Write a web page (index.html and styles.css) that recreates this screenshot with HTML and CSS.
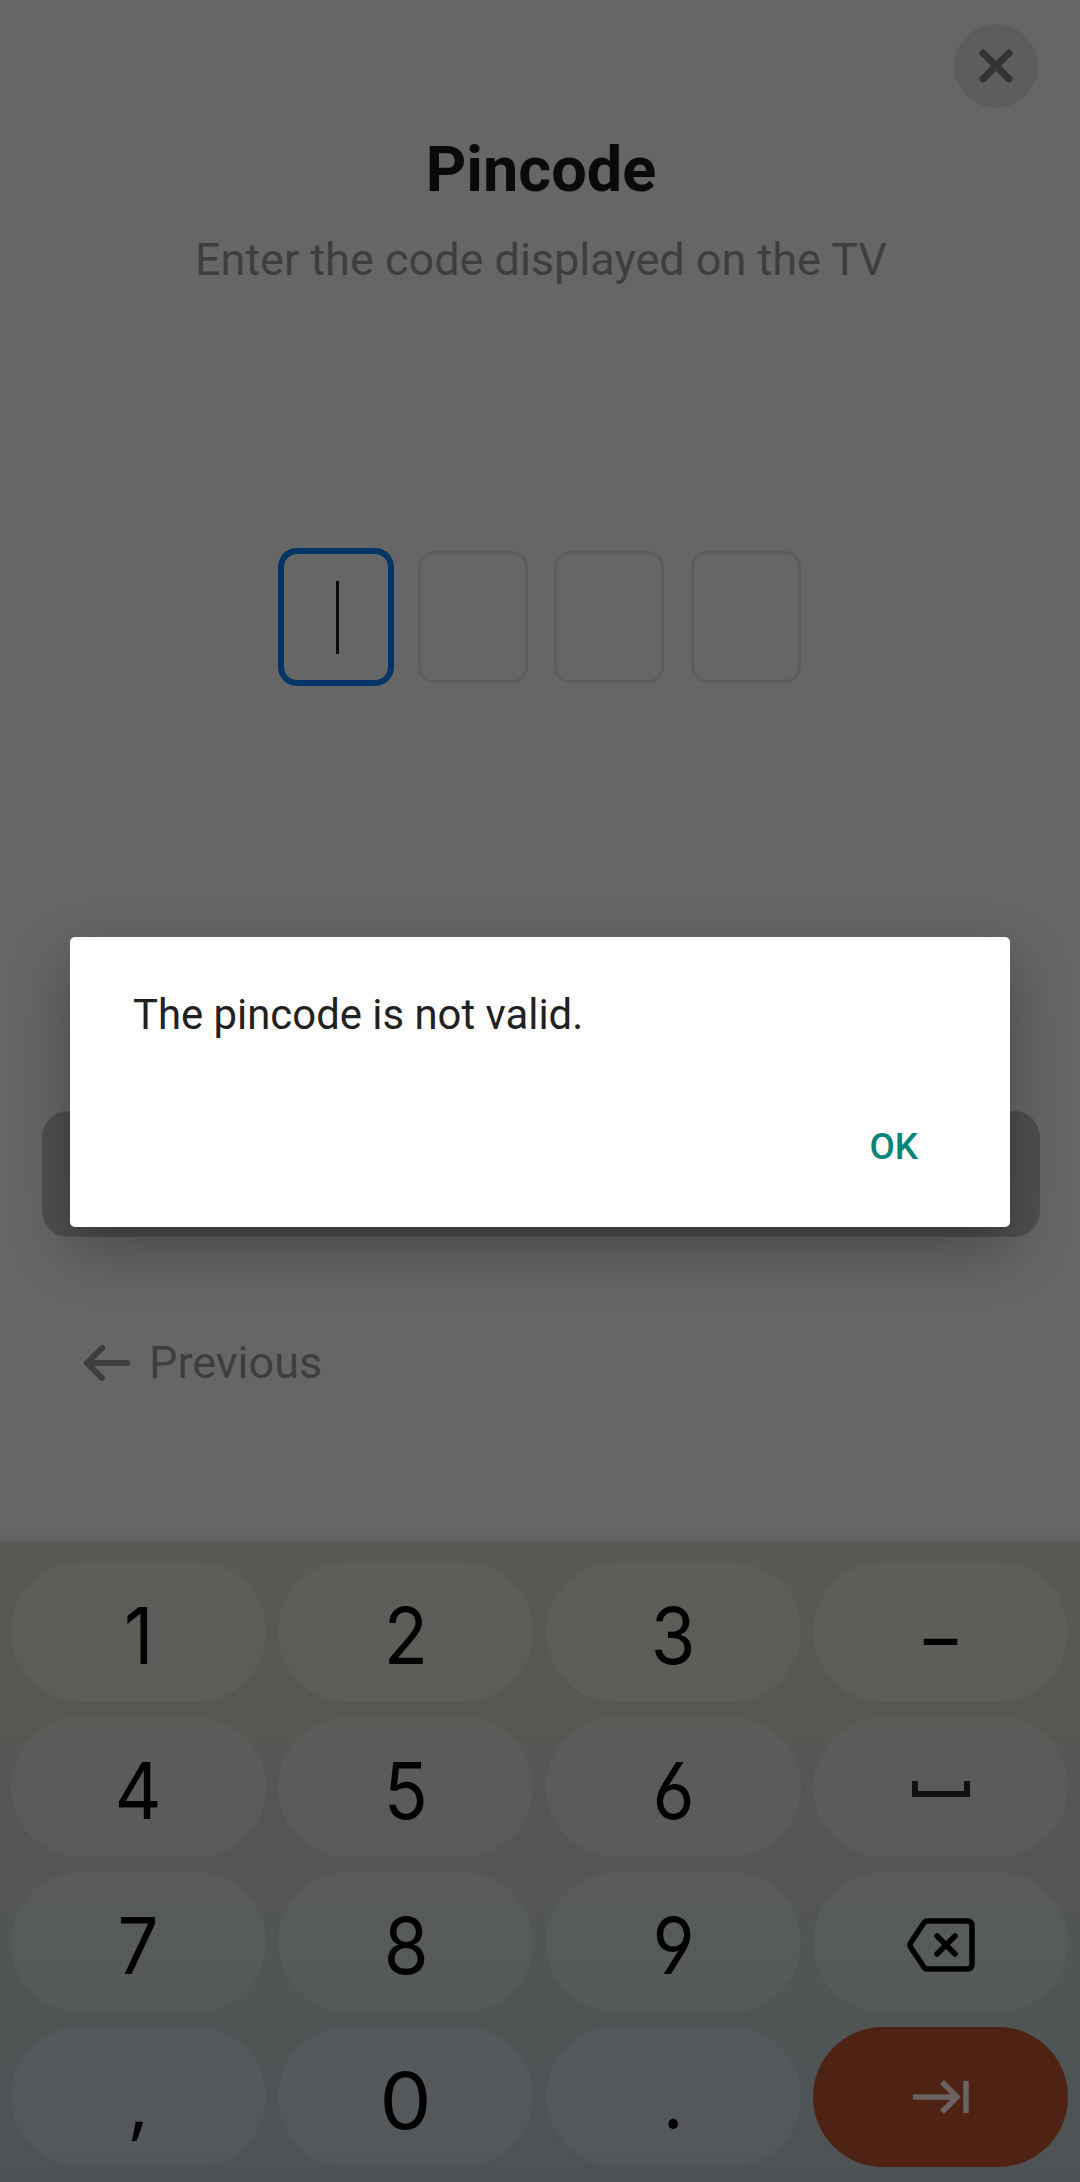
FILE: index.html
```
<!DOCTYPE html>
<html lang="en">
<head>
<meta charset="utf-8">
<title>Pincode</title>
<link rel="stylesheet" href="styles.css">
</head>
<body>
<div class="screen">
  <main class="page">
    <button class="close" aria-label="Close">
      <svg width="84" height="84" viewBox="0 0 84 84"><path d="M29 29 55 55M55 29 29 55"/></svg>
    </button>
    <h1 class="title">Pincode</h1>
    <p class="subtitle">Enter the code displayed on the TV</p>
    <div class="pins">
      <div class="pin pin-active"><span class="caret"></span></div>
      <div class="pin"></div>
      <div class="pin"></div>
      <div class="pin"></div>
    </div>
    <div class="submit"></div>
    <button class="previous">
      <svg width="46" height="38" viewBox="0 0 46 38"><path d="M43 19H3M18 4 3 19 18 34"/></svg>
      <span>Previous</span>
    </button>
  </main>
  <section class="keyboard">
    <button class="key"><span class="glyph">1</span></button>
    <button class="key"><span class="glyph">2</span></button>
    <button class="key"><span class="glyph">3</span></button>
    <button class="key key-dash"><span class="glyph">–</span></button>
    <button class="key"><span class="glyph">4</span></button>
    <button class="key"><span class="glyph">5</span></button>
    <button class="key"><span class="glyph open">6</span></button>
    <button class="key key-space" aria-label="Space">
      <svg class="space" width="60" height="18" viewBox="0 0 60 18"><path d="M4 1V14H56V1"/></svg>
    </button>
    <button class="key"><span class="glyph">7</span></button>
    <button class="key"><span class="glyph">8</span></button>
    <button class="key"><span class="glyph open">9</span></button>
    <button class="key key-backspace" aria-label="Backspace">
      <svg class="backspace" width="68" height="54" viewBox="0 0 68 54"><path d="M20 3H60Q65 3 65 8V46Q65 51 60 51H20Q18 51 16.500 48.500L3.500 29Q2.500 27 3.500 25L16.500 5.500Q18 3 20 3ZM30 18 48 36M48 18 30 36"/></svg>
    </button>
    <button class="key"><span class="glyph comma">,</span></button>
    <button class="key"><span class="glyph zero">0</span></button>
    <button class="key"><span class="glyph">.</span></button>
    <button class="key key-next" aria-label="Next">
      <svg class="next" width="58" height="34" viewBox="0 0 58 34"><path d="M1 17H46M30 2 45 17 30 32M54 1V33"/></svg>
    </button>
  </section>
  <div class="dialog" role="alertdialog">
    <p class="message">The pincode is not valid.</p>
    <button class="ok">OK</button>
  </div>
</div>
</body>
</html>
```
FILE: styles.css
```
* { box-sizing: border-box; margin: 0; padding: 0; }
body { font-family: Roboto, sans-serif; background: #666; }
button { border: 0; background: none; font: inherit; color: inherit; }
svg { display: block; fill: none; }

.screen {
  position: relative;
  width: 1080px;
  height: 2182px;
  overflow: hidden;
  display: flex;
  flex-direction: column;
  background: #666;
}
.page {
  height: 1541px;
  padding: 24px 40px 0 42px;
  display: flex;
  flex-direction: column;
  align-items: center;
  background: linear-gradient(#666 1530px, #616161);
}
.close {
  align-self: flex-end;
  width: 84px;
  height: 84px;
  margin-right: 2px;
  border-radius: 50%;
  background: #5c5d5f;
}
.close path { stroke: #333; stroke-width: 7; stroke-linecap: round; }
.title {
  margin-top: 25px;
  font-size: 63px;
  line-height: 74px;
  font-weight: 700;
  color: #0a0a0a;
}
.subtitle {
  margin-top: 27px;
  font-size: 45px;
  line-height: 52px;
  color: #3e3e3e;
  white-space: nowrap;
}
.pins {
  margin-top: 265px;
  display: flex;
  gap: 26.400px;
}
.pin {
  width: 110px;
  height: 132px;
  border: 3px solid #5c5d5d;
  border-radius: 16px;
}
.pin-active {
  display: flex;
  align-items: center;
  justify-content: center;
  border-color: #036;
  box-shadow: 0 0 0 3px #036;
}
.caret { width: 3px; height: 73px; margin-left: 2px; background: #0a0a0a; }
.submit {
  align-self: stretch;
  height: 126px;
  margin-top: 428px;
  border-radius: 26px;
  background: #4f4f4f;
}
.previous {
  align-self: flex-start;
  display: flex;
  align-items: center;
  gap: 19px;
  margin: 100px 0 0 42px;
  font-size: 45px;
  line-height: 52px;
  color: #3e3e3e;
}
.previous path { stroke: #3e3e3e; stroke-width: 6; stroke-linecap: round; stroke-linejoin: round; }

.keyboard {
  flex: 1;
  display: grid;
  grid-template-columns: repeat(4, 255px);
  grid-auto-rows: 140px;
  gap: 15px 12.400px;
  padding: 21px 11px 15px;
  background: linear-gradient(#5a5953, #585852 20%, #565654 33%, #535654 55%, #4f5455 78%, #4d5255);
}
.key {
  display: flex;
  align-items: center;
  justify-content: center;
  border-radius: 70px;
  background: rgba(120, 120, 125, .15);
  font-family: Inter, sans-serif;
  font-size: 78px;
  line-height: 94px;
  padding-top: 7px;
  color: #000;
}
.glyph { display: block; transform: scaleX(.93); }
.open { font-feature-settings: "ss01"; }
.zero { transform: scaleX(1.06); }
.comma { font-family: "Open Sans", sans-serif; transform: none; }
.key-dash { padding-top: 11px; }
.key-dash .glyph { transform: scaleX(.86); }
.key-space { padding-top: 4px; }
.key-backspace { padding-top: 5px; }
.space { stroke: #111; stroke-width: 6; }
.backspace { stroke: #000; stroke-width: 5.500; stroke-linecap: round; stroke-linejoin: round; }
.key-next { padding: 0; background: #4e2314; }
.next { stroke: #6b6361; stroke-width: 5.500; }

.dialog {
  position: absolute;
  left: 70px;
  top: 937px;
  width: 940px;
  height: 290px;
  padding: 53px 63px 37px;
  display: flex;
  flex-direction: column;
  justify-content: space-between;
  border-radius: 5px;
  background: #fff;
  box-shadow: 0 22px 60px rgba(0, 0, 0, .3);
}
.message { font-size: 41.850px; line-height: 49px; color: #212121; }
.ok {
  align-self: flex-end;
  margin-right: 29px;
  font-size: 36.750px;
  line-height: 86px;
  font-weight: 500;
  color: #048577;
}
```
